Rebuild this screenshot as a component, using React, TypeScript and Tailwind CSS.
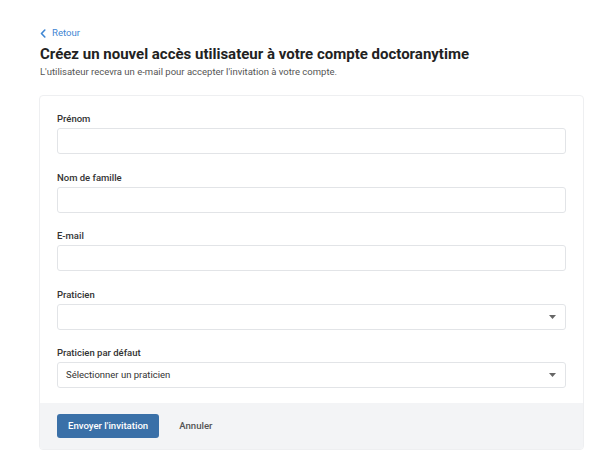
import React from "react";

function Field({ label, select, placeholder }: { label: string; select?: boolean; placeholder?: string }) {
  return (
    <div className="flex flex-col">
      <label className="text-[9.5px] font-medium text-[#333] leading-[12px] mb-[3px]">{label}</label>
      <div className="relative h-[26px] w-full rounded-[3px] border border-[#e2e4e7] bg-white flex items-center px-[8px]">
        {placeholder && <span className="text-[9.5px] text-[#333]">{placeholder}</span>}
        {select && (
          <svg className="absolute right-[9px] top-1/2 -translate-y-1/2" width="7" height="4" viewBox="0 0 7 4">
            <path d="M0 0 L7 0 L3.5 4 Z" fill="#666" />
          </svg>
        )}
      </div>
    </div>
  );
}

export default function App() {
  return (
    <div className="w-[600px] h-[465px] bg-white pl-[40px] pr-[16px] pt-[27px]" style={{ fontFamily: "Roboto, 'Liberation Sans', sans-serif" }}>
      <div className="flex items-center gap-[6px] text-[#3f86d3] text-[9.6px] h-[12px]">
        <svg width="6" height="9" viewBox="0 0 6 9" fill="none">
          <path d="M4.8 1 L1.5 4.5 L4.8 8" stroke="#3f86d3" strokeWidth="1.6" strokeLinecap="round" strokeLinejoin="round" />
        </svg>
        <span>Retour</span>
      </div>
      <h1 className="mt-[5px] text-[15px] font-bold text-[#222] leading-[20px]">
        Créez un nouvel accès utilisateur à votre compte doctoranytime
      </h1>
      <p className="text-[9.5px] text-[#555] leading-[14px] mt-[1px]">
        L'utilisateur recevra un e-mail pour accepter l'invitation à votre compte.
      </p>
      <div className="mt-[16px] -ml-[1px] rounded-[4px] border border-[#eeeff1] overflow-hidden">
        <div className="px-[17px] pt-[17px] pb-[15px] flex flex-col gap-[17.5px]">
          <Field label="Prénom" />
          <Field label="Nom de famille" />
          <Field label="E-mail" />
          <Field label="Praticien" select />
          <Field label="Praticien par défaut" select placeholder="Sélectionner un praticien" />
        </div>
        <div className="bg-[#f3f4f6] h-[46px] px-[17px] flex items-center gap-[20px]">
          <button className="h-[24px] px-[11px] rounded-[3px] bg-[#3a70a8] text-white text-[9.6px] font-medium">
            Envoyer l'invitation
          </button>
          <span className="text-[9.6px] font-medium text-[#555]">Annuler</span>
        </div>
      </div>
    </div>
  );
}
